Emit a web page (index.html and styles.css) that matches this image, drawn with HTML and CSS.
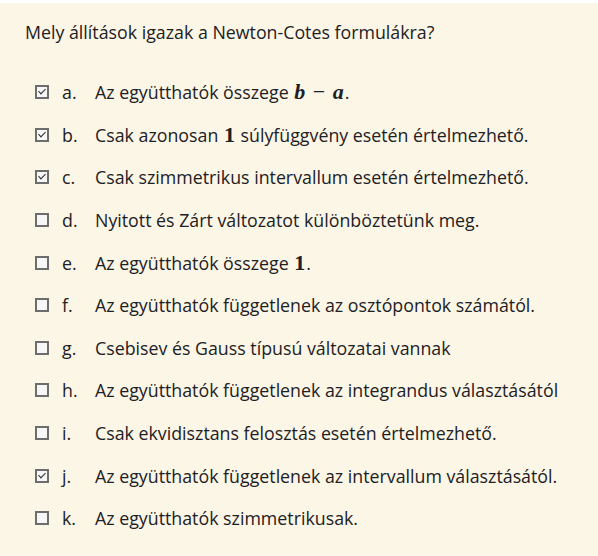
FILE: index.html
```html
<!DOCTYPE html>
<html lang="hu">
<head>
<meta charset="utf-8">
<link rel="stylesheet" href="styles.css">
</head>
<body>
<div class="panel">
  <div class="question">Mely állítások igazak a Newton-Cotes formulákra?</div>
  <div class="answers">
    <div class="row"><span class="box checked"></span><span class="letter">a.</span><span class="text">Az együtthatók összege <span class="math"><i>b</i> <span class="op">−</span> <i>a</i></span>.</span></div>
    <div class="row"><span class="box checked"></span><span class="letter">b.</span><span class="text">Csak azonosan <span class="math">1</span> súlyfüggvény esetén értelmezhető.</span></div>
    <div class="row"><span class="box checked"></span><span class="letter">c.</span><span class="text">Csak szimmetrikus intervallum esetén értelmezhető.</span></div>
    <div class="row"><span class="box"></span><span class="letter">d.</span><span class="text">Nyitott és Zárt változatot különböztetünk meg.</span></div>
    <div class="row"><span class="box"></span><span class="letter">e.</span><span class="text">Az együtthatók összege <span class="math">1</span>.</span></div>
    <div class="row"><span class="box"></span><span class="letter">f.</span><span class="text">Az együtthatók függetlenek az osztópontok számától.</span></div>
    <div class="row"><span class="box"></span><span class="letter">g.</span><span class="text">Csebisev és Gauss típusú változatai vannak</span></div>
    <div class="row"><span class="box"></span><span class="letter">h.</span><span class="text">Az együtthatók függetlenek az integrandus választásától</span></div>
    <div class="row"><span class="box"></span><span class="letter">i.</span><span class="text">Csak ekvidisztans felosztás esetén értelmezhető.</span></div>
    <div class="row"><span class="box checked"></span><span class="letter">j.</span><span class="text">Az együtthatók függetlenek az intervallum választásától.</span></div>
    <div class="row"><span class="box"></span><span class="letter">k.</span><span class="text">Az együtthatók szimmetrikusak.</span></div>
  </div>
</div>
</body>
</html>
```

FILE: styles.css
```css
html, body {
  margin: 0;
  padding: 0;
  background: #ffffff;
}
body {
  font-family: "Open Sans", "Noto Sans", sans-serif;
  color: #1d2125;
}
.panel {
  margin-top: 3px;
  background: #fcf6e6;
  height: 553px;
  padding: 17px 0 0 25px;
  box-sizing: border-box;
}
.question {
  font-size: 17.8px;
  line-height: 24px;
}
.answers {
  margin-top: 27px;
  display: flex;
  flex-direction: column;
}
.row {
  display: flex;
  align-items: center;
  height: 42.6px;
  padding-left: 10px;
  font-size: 17.8px;
}
.box {
  width: 10px;
  height: 10px;
  border: 2px solid #6d6d6d;
  background: #f7f7f7;
  position: relative;
  flex: none;
}
.box.checked::after {
  content: "";
  position: absolute;
  left: 3px;
  top: 0px;
  width: 3px;
  height: 6px;
  border-right: 1.6px solid #2b2b2b;
  border-bottom: 1.6px solid #2b2b2b;
  transform: rotate(45deg);
}
.letter {
  width: 33px;
  margin-left: 13px;
  flex: none;
}
.math {
  font-family: "Liberation Serif", "DejaVu Serif", serif;
  font-size: 22px;
  font-weight: bold;
  line-height: 1;
  padding: 0 1px;
}
.math .op {
  font-weight: normal;
  padding: 0 2px;
}
```
